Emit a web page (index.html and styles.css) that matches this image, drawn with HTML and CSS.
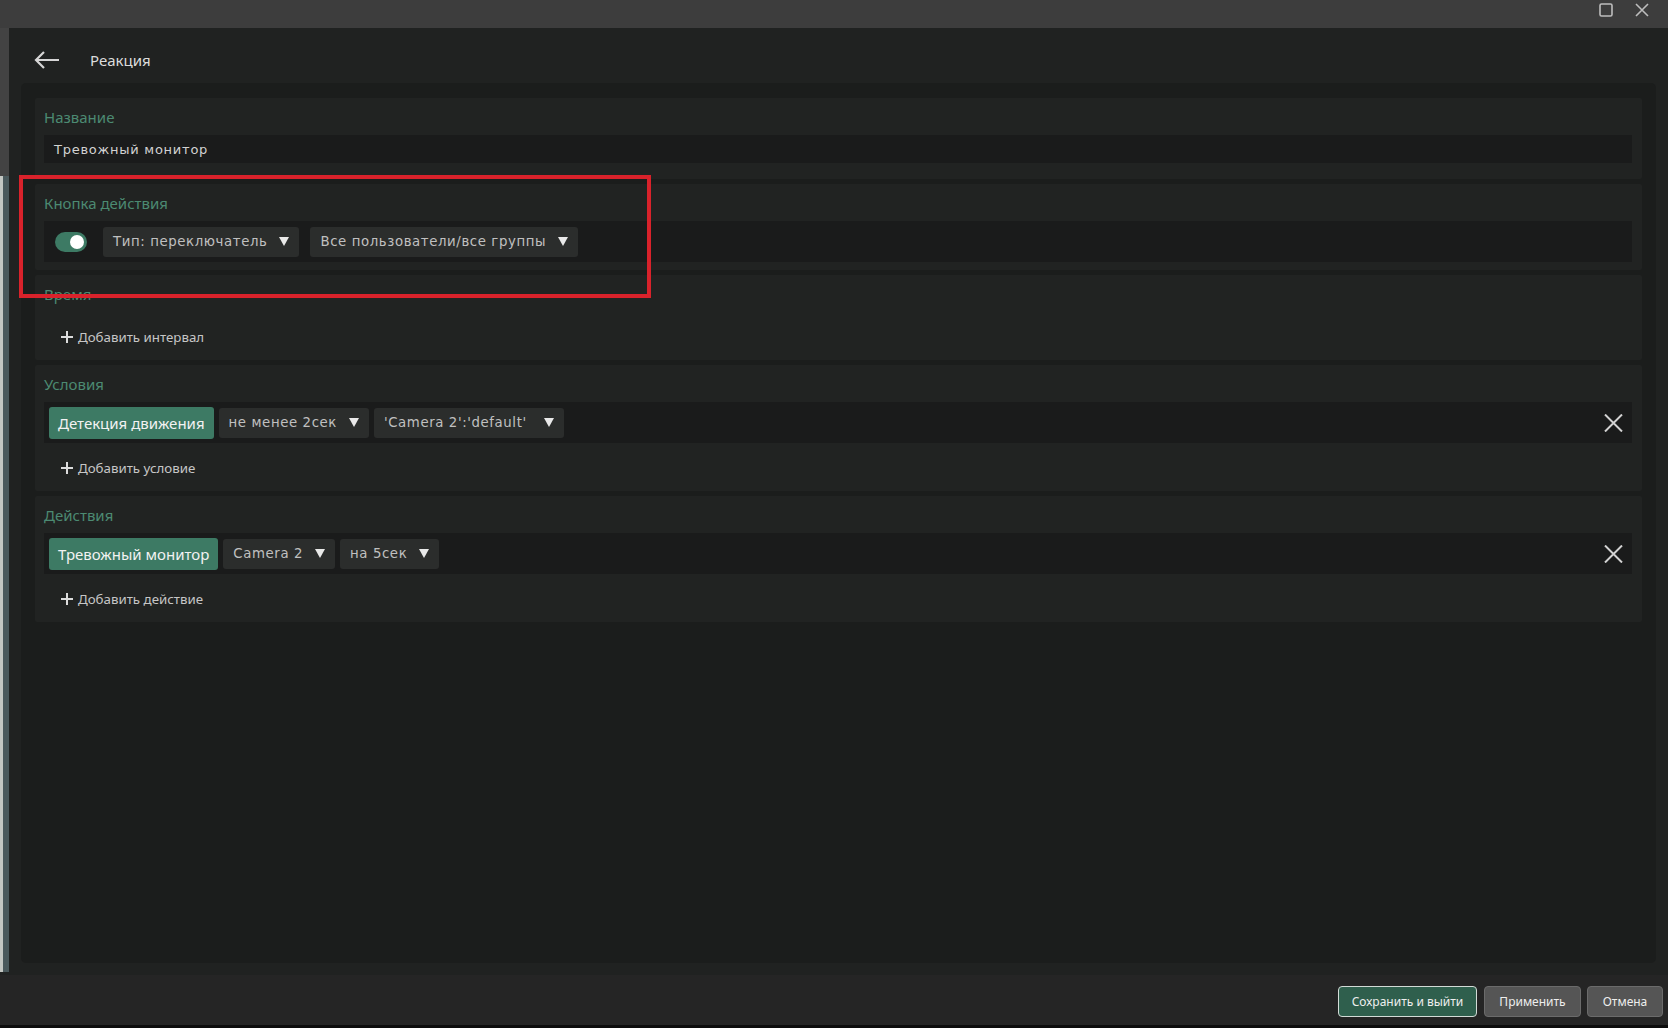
FILE: index.html
```html
<!DOCTYPE html>
<html>
	<head>
		<meta charset="utf-8">
		<link rel="stylesheet" href="styles.css">
	</head>
	<body>
		<div class="titlebar">
			<svg class="win-btn" width="16" height="16" viewBox="0 0 16 16"><rect x="2" y="2" width="12" height="12" rx="1.5" fill="none" stroke="#bdbdbd" stroke-width="1.6"/></svg>
			<svg class="win-btn" width="16" height="16" viewBox="0 0 16 16"><path d="M2 2 L14 14 M14 2 L2 14" stroke="#bdbdbd" stroke-width="1.6"/></svg>
		</div>

		<div class="main">
			<div class="sidestrip">
				<div class="strip-top"></div>
				<div class="strip-bottom"></div>
			</div>

			<div class="window">
				<div class="header">
					<svg class="back" width="26" height="18" viewBox="0 0 26 18"><path d="M25 9 H2 M10 1 L2 9 L10 17" fill="none" stroke="#d6d6d6" stroke-width="2.2"/></svg>
					<span class="title">Реакция</span>
				</div>

				<div class="panel">
					<!-- название -->
					<div class="section">
						<div class="label">Название</div>
						<div class="input">Тревожный монитор</div>
					</div>

					<!-- кнопка действия -->
					<div class="section">
						<div class="label">Кнопка действия</div>
						<div class="strip strip-button">
							<div class="toggle"><div class="knob"></div></div>
							<div class="select">Тип: переключатель<span class="arrow"></span></div>
							<div class="select">Все пользователи/все группы<span class="arrow"></span></div>
						</div>
					</div>

					<!-- время -->
					<div class="section with-add">
						<div class="label">Время</div>
						<div class="add add-only"><span class="plus"></span>Добавить интервал</div>
					</div>

					<!-- условия -->
					<div class="section with-add">
						<div class="label">Условия</div>
						<div class="strip">
							<div class="chip">Детекция движения</div>
							<div class="select">не менее 2сек<span class="arrow"></span></div>
							<div class="select">'Camera 2':'default' <span class="arrow"></span></div>
							<svg class="remove" width="19" height="18" viewBox="0 0 19 18"><path d="M1 0.5 L18 17.5 M18 0.5 L1 17.5" stroke="#d2d2d2" stroke-width="2"/></svg>
						</div>
						<div class="add"><span class="plus"></span>Добавить условие</div>
					</div>

					<!-- действия -->
					<div class="section with-add">
						<div class="label">Действия</div>
						<div class="strip">
							<div class="chip">Тревожный монитор</div>
							<div class="select">Camera 2<span class="arrow"></span></div>
							<div class="select">на 5сек<span class="arrow"></span></div>
							<svg class="remove" width="19" height="18" viewBox="0 0 19 18"><path d="M1 0.5 L18 17.5 M18 0.5 L1 17.5" stroke="#d2d2d2" stroke-width="2"/></svg>
						</div>
						<div class="add"><span class="plus"></span>Добавить действие</div>
					</div>
				</div>
			</div>
		</div>

		<div class="footer">
			<div class="btn btn-save">Сохранить и выйти</div>
			<div class="btn btn-apply">Применить</div>
			<div class="btn btn-cancel">Отмена</div>
		</div>

		<!-- красная рамка поверх блока -->
		<div class="highlight"></div>
	</body>
</html>
```

FILE: styles.css
```css
html, body {
	margin: 0;
	padding: 0;
}

body {
	width: 1668px;
	height: 1028px;
	overflow: hidden;
	position: relative;
	background-color: #202221;
	font-family: "Noto Sans", "DejaVu Sans", sans-serif;
	color: #d0d0d0;
}

.titlebar {
	height: 28px;
	background-color: #3d3d3d;
	display: flex;
	justify-content: flex-end;
	align-items: flex-start;
	padding-right: 18px;
	gap: 20px;
	box-sizing: border-box;
}

.win-btn {
	margin-top: 2px;
}

.main {
	display: flex;
	height: 947px;
}

.sidestrip {
	width: 9px;
	height: 944px;
	display: flex;
	flex-direction: column;
}

.strip-top {
	height: 148px;
	background-color: #434343;
}

.strip-bottom {
	flex: 1;
	border-left: 3px solid #c3c7c3;
	background-color: #4a595c;
}

.window {
	flex: 1;
	display: flex;
	flex-direction: column;
}

.header {
	height: 55px;
	box-sizing: border-box;
	padding: 9px 0 0 25px;
	display: flex;
	align-items: center;
	gap: 30px;
}

.title {
	font-size: 15px;
	color: #dcdcdc;
}

.panel {
	height: 880px;
	margin: 0 12px;
	box-sizing: border-box;
	padding: 15px 14px;
	background-color: #1b1d1c;
	border-radius: 5px;
	display: flex;
	flex-direction: column;
	gap: 5px;
}

.section {
	background-color: #212322;
	padding: 8px 10px 8px 9px;
	border-radius: 2px;
}

.section.with-add {
	padding-bottom: 6px;
}

.label {
	font-size: 15px;
	line-height: 22px;
	height: 22px;
	margin-bottom: 7px;
	color: #4c8a72;
}

.input {
	height: 28px;
	margin-bottom: 8px;
	padding-left: 10px;
	background-color: #1a1b1b;
	display: flex;
	align-items: center;
	font-family: "DejaVu Sans", sans-serif;
	font-size: 13px;
	letter-spacing: 0.75px;
	color: #d2d2d2;
}

.strip {
	height: 41px;
	background-color: #1a1b1b;
	display: flex;
	align-items: center;
	gap: 5px;
	padding-left: 5px;
}

.strip-button {
	padding-left: 11px;
	gap: 11px;
}

.toggle {
	width: 32px;
	height: 20px;
	border-radius: 10px;
	background-color: #3d7a64;
	position: relative;
	margin-right: 5px;
}

.knob {
	position: absolute;
	right: 3px;
	top: 3px;
	width: 14px;
	height: 14px;
	border-radius: 50%;
	background-color: #ffffff;
}

.select {
	height: 30px;
	padding: 0 10px;
	background-color: #2b2d2c;
	border-radius: 3px;
	display: flex;
	align-items: center;
	gap: 12px;
	font-family: "DejaVu Sans", sans-serif;
	font-size: 13.3px;
	letter-spacing: 0.6px;
	color: #c0c0c0;
	white-space: pre;
}

.arrow {
	width: 0;
	height: 0;
	border-left: 5px solid transparent;
	border-right: 5px solid transparent;
	border-top: 9px solid #e9e9e9;
}

.chip {
	height: 32px;
	padding: 0 9px;
	background-color: #3d7a64;
	border-radius: 3px;
	display: flex;
	align-items: center;
	font-size: 15px;
	color: #f2f2f2;
}

.remove {
	margin-left: auto;
	margin-right: 9px;
}

.add {
	height: 34px;
	margin-top: 8px;
	padding-left: 17px;
	display: flex;
	align-items: center;
	gap: 5px;
	font-size: 13.3px;
	color: #c6c6c6;
}

.add.add-only {
	margin-top: 15px;
}

.plus {
	width: 12px;
	height: 12px;
	position: relative;
}

.plus::before, .plus::after {
	content: "";
	position: absolute;
	background-color: #dcdcdc;
}

.plus::before {
	left: 0;
	top: 5px;
	width: 12px;
	height: 2px;
}

.plus::after {
	left: 5px;
	top: 0;
	width: 2px;
	height: 12px;
}

.footer {
	height: 53px;
	box-sizing: border-box;
	background-color: #252525;
	border-bottom: 3px solid #0c0c0c;
	display: flex;
	justify-content: flex-end;
	align-items: flex-start;
	padding: 11px 5px 0 0;
	gap: 6px;
}

.btn {
	height: 31px;
	box-sizing: border-box;
	border-radius: 4px;
	display: flex;
	align-items: center;
	justify-content: center;
	font-size: 12px;
	color: #eeeeee;
}

.btn-save {
	width: 139px;
	background-color: #2f5f4d;
	border: 1px solid #d3dbd7;
	margin-right: 1px;
}

.btn-apply {
	width: 97px;
	background-color: #555555;
	border: 1px solid #6b6b6b;
}

.btn-cancel {
	width: 76px;
	background-color: #555555;
	border: 1px solid #6b6b6b;
}

.highlight {
	position: absolute;
	left: 19px;
	top: 175px;
	width: 632px;
	height: 123px;
	box-sizing: border-box;
	border: 4px solid #d9222b;
}
```
